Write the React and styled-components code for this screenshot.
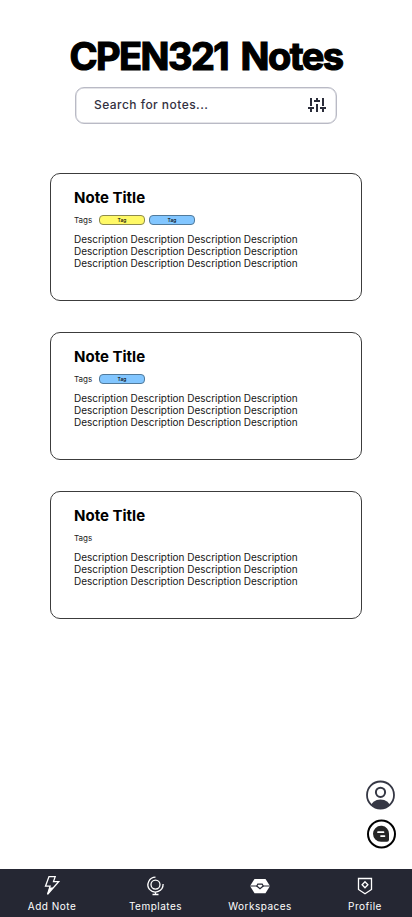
import React from "react";
import styled, { createGlobalStyle } from "styled-components";

const GlobalStyle = createGlobalStyle`
  * { box-sizing: border-box; }
  body { margin: 0; background: #fff; font-family: Inter, sans-serif; color: #000; }
`;

const Screen = styled.div`
  display: flex;
  flex-direction: column;
  width: 412px;
  height: 917px;
  background: #fff;
  overflow: hidden;
`;

const Header = styled.header`
  display: flex;
  flex-direction: column;
  align-items: center;
  padding-top: 32px;
`;

const Title = styled.h1`
  margin: 0;
  height: 48px;
  font-size: 38px;
  line-height: 48px;
  font-weight: 700;
  letter-spacing: -1.55px;
  word-spacing: 5px;
  white-space: nowrap;
  -webkit-text-stroke: 1.2px #000;
`;

const SearchBar = styled.div`
  display: flex;
  align-items: center;
  justify-content: space-between;
  width: 262px;
  height: 37px;
  margin-top: 7px;
  padding: 0 9px 2px 18px;
  border: 1px solid #b9bac5;
  box-shadow: inset 0 0 0 0.5px #c9cad2;
  border-radius: 9px;
`;

const SearchText = styled.span`
  font-size: 12px;
  font-weight: 500;
  letter-spacing: 0.46px;
  color: #33313f;
`;

const NoteList = styled.main`
  display: flex;
  flex-direction: column;
  gap: 31px;
  width: 312px;
  margin: 49px 0 0 50px;
`;

const Card = styled.article`
  height: 128px;
  padding: 15px 23px;
  border: 1px solid #3c3c3c;
  border-radius: 10px;
`;

const NoteTitle = styled.h2`
  margin: 0;
  font-size: 15px;
  line-height: 18px;
  font-weight: 700;
`;

const TagRow = styled.div`
  display: flex;
  align-items: center;
  height: 10px;
  margin-top: 8px;
  gap: 4px;
`;

const TagLabel = styled.span`
  width: 21px;
  font-size: 8px;
  line-height: 10px;
  color: #222;
`;

const Tag = styled.span`
  width: 46px;
  height: 10px;
  border: 1px solid ${(p) => p.$edge};
  border-radius: 4px;
  background: ${(p) => p.$fill};
  font-size: 5px;
  line-height: 8px;
  font-weight: 500;
  text-align: center;
`;

const Description = styled.p`
  margin: 8px 0 0;
  font-size: 10px;
  line-height: 12px;
  letter-spacing: -0.025px;
  color: #161616;
  white-space: pre-line;
`;

const Actions = styled.aside`
  display: flex;
  flex-direction: column;
  gap: 9px;
  margin: auto 16px 20px auto;
`;

const IconButton = styled.button`
  display: block;
  width: 30px;
  height: 30px;
  padding: 0;
  border: 0;
  background: none;
`;

const NavBar = styled.nav`
  display: grid;
  grid-template-columns: 104px 103px 106px 99px;
  height: 48px;
  background: #252733;
`;

const NavItem = styled.div`
  display: flex;
  flex-direction: column;
  align-items: center;
  padding: 6px 0 0 ${(p) => p.$shift || 0}px;
  color: #fff;
`;

const NavLabel = styled.span`
  margin-top: 3px;
  font-size: 10px;
  line-height: 13px;
  letter-spacing: 0.5px;
`;

const SlidersIcon = () => (
  <svg width="20" height="18" viewBox="0 0 20 18" fill="none" stroke="#2b2d3a" strokeWidth="2">
    <path d="M4 2v8M4 13v3M1 12h6M10 8v8M10 2v2M7 5h6M16 2v8M16 13v3M13 12h6" />
  </svg>
);

const PersonIcon = () => (
  <svg width="30" height="30" viewBox="0 0 30 30">
    <clipPath id="person"><circle cx="14.5" cy="15" r="13.5" /></clipPath>
    <circle cx="14.5" cy="15" r="13.5" fill="none" stroke="#353744" strokeWidth="1.8" />
    <circle cx="14.5" cy="12.3" r="4.6" fill="none" stroke="#353744" strokeWidth="2" />
    <ellipse cx="14.5" cy="27" rx="9.8" ry="7.5" fill="#353744" clipPath="url(#person)" />
  </svg>
);

const ChatIcon = () => (
  <svg width="30" height="30" viewBox="0 0 30 30">
    <circle cx="15.5" cy="15" r="13.5" fill="#fff" stroke="#000" strokeWidth="2" />
    <path d="M15 6.8h1a7.8 7.8 0 0 1 7 8v6q0 2-2 2H15a8 8 0 0 1 0-16Z" fill="#252525" />
    <path d="M12 13.2h5.5M15 17.1h3.5" stroke="#fff" strokeWidth="1.7" strokeLinecap="round" />
  </svg>
);

const BoltIcon = () => (
  <svg width="22" height="22" viewBox="0 0 22 22" fill="none" stroke="currentColor" strokeWidth="1.3">
    <path d="M8 1.6h6.2l-1.7 5h5.2L6.6 19.2l2.5-8H4.5Z" />
    <path d="M8.4 12.6h3.8L6 19.9Z" fill="currentColor" stroke="none" />
  </svg>
);

const GlobeIcon = () => (
  <svg width="22" height="22" viewBox="0 0 22 22" fill="none" stroke="currentColor" strokeWidth="1.3">
    <circle cx="10.5" cy="9.6" r="4.5" />
    <path d="M10.5 2.2A7.6 7.6 0 0 0 4.5 14.4A7.8 7.8 0 0 0 18.1 9M10.5 17v2.5M7.5 19.5h6" />
  </svg>
);

const WorkspaceIcon = () => (
  <svg width="22" height="22" viewBox="0 0 22 22">
    <path d="M5.5 4h11l4.5 7-4.5 7.3h-11L1 11Z" fill="currentColor" />
    <path d="M1 11h7M14 11h7" stroke="#252733" strokeWidth="1.2" />
    <path d="M8.8 9.2h4.4l1 1.8-3.2 2.7L7.8 11Z" fill="#fff" stroke="#252733" strokeWidth="1.2" />
  </svg>
);

const ShieldIcon = () => (
  <svg width="22" height="22" viewBox="0 0 22 22" fill="none" stroke="currentColor" strokeWidth="1.3">
    <path d="M4.5 3.5h13v11L11 18.8l-6.5-4.3Z" />
    <path d="m11 6.8 2.9 3-2.9 3-2.9-3Z" />
  </svg>
);

const yellow = { fill: "#fff966", edge: "#8d8b4d" };
const blue = { fill: "#82c6ff", edge: "#517a9b" };
const notes = [[yellow, blue], [blue], []];
const line = "Description Description Description Description";
const navItems = [
  { label: "Add Note", Icon: BoltIcon },
  { label: "Templates", Icon: GlobeIcon },
  { label: "Workspaces", Icon: WorkspaceIcon },
  { label: "Profile", Icon: ShieldIcon, shift: 5 },
];

export default function App() {
  return (
    <Screen>
      <GlobalStyle />
      <Header>
        <Title>CPEN321 Notes</Title>
        <SearchBar>
          <SearchText>Search for notes...</SearchText>
          <SlidersIcon />
        </SearchBar>
      </Header>
      <NoteList>
        {notes.map((tags, i) => (
          <Card key={i}>
            <NoteTitle>Note Title</NoteTitle>
            <TagRow>
              <TagLabel>Tags</TagLabel>
              {tags.map((tag) => (
                <Tag key={tag.fill} $fill={tag.fill} $edge={tag.edge}>Tag</Tag>
              ))}
            </TagRow>
            <Description>{[line, line, line].join("\n")}</Description>
          </Card>
        ))}
      </NoteList>
      <Actions>
        <IconButton aria-label="Account"><PersonIcon /></IconButton>
        <IconButton aria-label="Chat"><ChatIcon /></IconButton>
      </Actions>
      <NavBar>
        {navItems.map(({ label, Icon, shift }) => (
          <NavItem key={label} $shift={shift}>
            <Icon />
            <NavLabel>{label}</NavLabel>
          </NavItem>
        ))}
      </NavBar>
    </Screen>
  );
}
